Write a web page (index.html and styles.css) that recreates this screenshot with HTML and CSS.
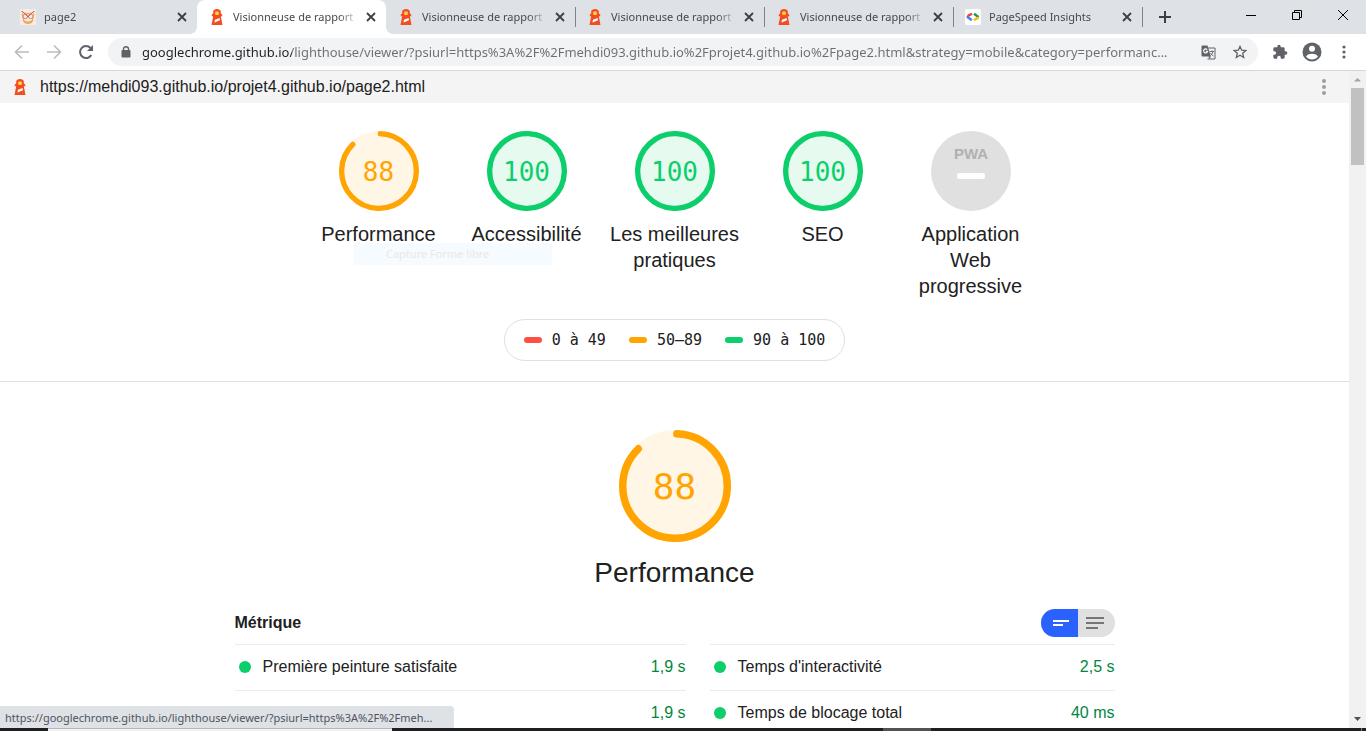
FILE: index.html
```html
<!DOCTYPE html>
<html lang="fr">
<head>
<meta charset="utf-8">
<title>Visionneuse de rapport</title>
<link rel="stylesheet" href="styles.css">
</head>
<body>
<svg class="defs" aria-hidden="true">
  <symbol id="lighthouse" viewBox="0 0 16 16">
    <path fill="#f44b21" d="M8 0C6 0 4.200 1.200 4.200 2.600V4.600L2.800 5.400V7.200H4.200L2.500 16H13.500L11.800 7.200H13.200V5.400L11.800 4.600V2.600C11.800 1.200 10 0 8 0Z"/>
    <rect x="6.200" y="2.600" width="3.600" height="3.400" rx="0.800" fill="#ffd54a"/>
    <path fill="#fff" d="M6 10.800L10.600 9L11 11.200L5.500 13.500Z"/>
  </symbol>
  <symbol id="cross" viewBox="0 0 10 10">
    <path d="M1 1L9 9M9 1L1 9" stroke="currentColor" stroke-width="1.800" fill="none"/>
  </symbol>
</svg>
<div class="browser">
  <div class="tabstrip">
    <div class="tab tab-plain">
      <svg class="favicon" viewBox="0 0 16 16"><rect width="16" height="16" fill="#f6ebe7"/><path d="M1.500 2C3 4.500 5 4.500 8 4.500S13 4.500 14.500 2M2 4.500L3 9C4 13 6 14.500 8 14.500S12 13 13 9L14 4.500M5.500 12L8 13.500L10.500 12M3 11L5 14M13 11L11 14" fill="none" stroke="#e9a85f" stroke-width="1.100"/><circle cx="5.300" cy="7.300" r="2.300" fill="none" stroke="#dc7a6a"/><circle cx="10.700" cy="7.300" r="2.300" fill="none" stroke="#e08a5a"/><path d="M2 2L8 8L14 2" fill="none" stroke="#cf5a50" stroke-width="0.900"/></svg>
      <span class="tab-title">page2</span>
      <button class="tab-close" aria-label="Fermer"><svg><use href="#cross"/></svg></button>
    </div>
    <div class="tab tab-active">
      <svg class="favicon"><use href="#lighthouse"/></svg>
      <span class="tab-title">Visionneuse de rapport</span>
      <button class="tab-close" aria-label="Fermer"><svg><use href="#cross"/></svg></button>
    </div>
    <div class="tab">
      <svg class="favicon"><use href="#lighthouse"/></svg>
      <span class="tab-title">Visionneuse de rapport</span>
      <button class="tab-close" aria-label="Fermer"><svg><use href="#cross"/></svg></button>
    </div>
    <div class="tab">
      <svg class="favicon"><use href="#lighthouse"/></svg>
      <span class="tab-title">Visionneuse de rapport</span>
      <button class="tab-close" aria-label="Fermer"><svg><use href="#cross"/></svg></button>
    </div>
    <div class="tab">
      <svg class="favicon"><use href="#lighthouse"/></svg>
      <span class="tab-title">Visionneuse de rapport</span>
      <button class="tab-close" aria-label="Fermer"><svg><use href="#cross"/></svg></button>
    </div>
    <div class="tab">
      <svg class="favicon" viewBox="0 0 16 16"><rect width="16" height="16" rx="2" fill="#fff"/><g fill="none" stroke-width="2.400"><path d="M7 4.800L3.800 6.400Q1.500 8 3.800 8.600" stroke="#ea4335"/><path d="M2.300 7.800L6.800 11.200" stroke="#4285f4"/><path d="M9 4.800L13.700 8.200" stroke="#0f9d58"/><path d="M9 11.200L13.700 8.200" stroke="#fbbc05"/></g></svg>
      <span class="tab-title">PageSpeed Insights</span>
      <button class="tab-close" aria-label="Fermer"><svg><use href="#cross"/></svg></button>
    </div>
    <button class="new-tab" aria-label="Nouvel onglet"><svg viewBox="0 0 14 14" width="14" height="14"><path d="M7 1V13M1 7H13" stroke="#3c4043" stroke-width="2"/></svg></button>
    <div class="window-controls">
      <button aria-label="Réduire"><svg width="10" height="10"><path d="M0 5.500H10" stroke="#000"/></svg></button>
      <button aria-label="Restaurer"><svg width="10" height="10"><path d="M.5 2.500H7.500V9.500H.5ZM2.500 2.500V.5H9.500V7.500H7.500" fill="none" stroke="#000"/></svg></button>
      <button aria-label="Fermer la fenêtre"><svg width="10" height="10"><path d="M0 0L10 10M10 0L0 10" stroke="#000"/></svg></button>
    </div>
  </div>

  <div class="navbar">
    <button class="nav-button nav-off" aria-label="Précédent"><svg width="16" height="16" viewBox="0 0 16 16"><path d="M15 8H2M8 1.500L1.500 8L8 14.500" fill="none" stroke="currentColor" stroke-width="1.700"/></svg></button>
    <button class="nav-button nav-off" aria-label="Suivant"><svg width="16" height="16" viewBox="0 0 16 16"><path d="M1 8H14M8 1.500L14.500 8L8 14.500" fill="none" stroke="currentColor" stroke-width="1.700"/></svg></button>
    <button class="nav-button" aria-label="Actualiser"><svg width="16" height="16" viewBox="0 0 16 16"><path d="M13.300 11A6 6 0 1 1 12.500 4" fill="none" stroke="currentColor" stroke-width="2"/><path d="M15 1V7H9Z" fill="currentColor"/></svg></button>
    <div class="omnibox">
      <svg width="10" height="12" viewBox="0 0 10 12"><path d="M2.500 5V3A2.500 2.300 0 0 1 7.500 3V5" fill="none" stroke="#5f6368" stroke-width="1.400"/><rect x="0.500" y="4" width="9" height="7.500" rx="1" fill="#5f6368"/></svg>
      <input class="address" type="text" aria-label="Adresse" value="googlechrome.github.io/lighthouse/viewer/?psiurl=https%3A%2F%2Fmehdi093.github.io%2Fprojet4.github.io%2Fpage2.html&amp;strategy=mobile&amp;category=performanc...">
      <button class="omni-button" aria-label="Traduire"><svg width="15" height="15" viewBox="0 0 15 15"><path d="M6 3H14V14H6.500" fill="none" stroke="#5f6368"/><path d="M1.500 0.500H6.500L9.800 11.500H1.500Q0.500 11.500 0.500 10.500V1.500Q0.500 0.500 1.500 0.500Z" fill="#5f6368"/><path d="M6.200 4.600A2 2 0 1 0 6.600 6.300H4.800" fill="none" stroke="#fff" stroke-width="1.100"/><path d="M8.500 6.500H13M10.800 5.500V6.500M12 6.700Q11.500 9 9.500 10.500M9.500 8Q10.500 10 12.500 11" fill="none" stroke="#5f6368" stroke-width="0.900"/><path d="M7 11.500L9 14L9.800 11.500Z" fill="#5f6368"/></svg></button>
      <button class="omni-button" aria-label="Favori"><svg width="14" height="14" viewBox="0 0 14 14"><path d="M7 1.400L8.700 5.200L12.900 5.600L9.700 8.300L10.700 12.500L7 10.300L3.300 12.500L4.300 8.300L1.100 5.600L5.300 5.200Z" fill="none" stroke="#5f6368" stroke-width="1.300"/></svg></button>
    </div>
    <button class="nav-tool" aria-label="Extensions"><svg width="16" height="16" viewBox="0 0 24 24"><path fill="#5f6368" d="M20.500 11H19V7c0-1.100-.9-2-2-2h-4V3.500a2.500 2.500 0 0 0-5 0V5H4c-1.100 0-2 .9-2 2v3.800h1.500a2.700 2.700 0 0 1 0 5.400H2V20c0 1.100.9 2 2 2h3.800v-1.500a2.700 2.700 0 0 1 5.400 0V22H17c1.100 0 2-.9 2-2v-4h1.500a2.500 2.500 0 0 0 0-5z"/></svg></button>
    <button class="nav-tool" aria-label="Profil"><svg width="20" height="20" viewBox="0 0 20 20"><circle cx="10" cy="10" r="9.500" fill="#5f6368"/><circle cx="10" cy="6.800" r="3" fill="#fff"/><path d="M4 14.500C5 12.400 8 11.700 10 11.700S15 12.400 16 14.500A7.500 7.500 0 0 1 4 14.500Z" fill="#fff"/></svg></button>
    <button class="nav-tool" aria-label="Menu"><svg width="4" height="14" viewBox="0 0 4 14" fill="#5f6368"><circle cx="2" cy="2" r="1.600"/><circle cx="2" cy="7" r="1.600"/><circle cx="2" cy="12" r="1.600"/></svg></button>
  </div>

  <div class="viewport">
    <main class="report">
      <div class="topbar">
        <svg class="topbar-logo"><use href="#lighthouse"/></svg>
        <a class="topbar-url" href="#">https://mehdi093.github.io/projet4.github.io/page2.html</a>
        <button class="topbar-menu" aria-label="Outils"><svg width="4" height="16" viewBox="0 0 4 16" fill="#9e9e9e"><circle cx="2" cy="2" r="2"/><circle cx="2" cy="8" r="2"/><circle cx="2" cy="14" r="2"/></svg></button>
      </div>

      <header class="scores">
        <div class="gauges">
          <a class="gauge average" href="#performance">
            <span class="dial"><svg viewBox="0 0 120 120"><circle class="dial-base" cx="60" cy="60" r="60"/><circle class="dial-arc" cx="60" cy="60" r="56" stroke-dasharray="305.800 352"/></svg><span class="dial-value">88</span></span>
            <span class="gauge-label">Performance</span>
          </a>
          <a class="gauge pass" href="#a11y">
            <span class="dial"><svg viewBox="0 0 120 120"><circle class="dial-base" cx="60" cy="60" r="60"/><circle class="dial-arc" cx="60" cy="60" r="56"/></svg><span class="dial-value">100</span></span>
            <span class="gauge-label">Accessibilité</span>
          </a>
          <a class="gauge pass" href="#best">
            <span class="dial"><svg viewBox="0 0 120 120"><circle class="dial-base" cx="60" cy="60" r="60"/><circle class="dial-arc" cx="60" cy="60" r="56"/></svg><span class="dial-value">100</span></span>
            <span class="gauge-label">Les meilleures pratiques</span>
          </a>
          <a class="gauge pass" href="#seo">
            <span class="dial"><svg viewBox="0 0 120 120"><circle class="dial-base" cx="60" cy="60" r="60"/><circle class="dial-arc" cx="60" cy="60" r="56"/></svg><span class="dial-value">100</span></span>
            <span class="gauge-label">SEO</span>
          </a>
          <a class="gauge" href="#pwa">
            <span class="dial"><svg viewBox="0 0 80 80"><circle cx="40" cy="40" r="40" fill="#e0e0e0"/><text class="pwa-mark" x="40" y="28" text-anchor="middle">PWA</text><rect x="26" y="42" width="28" height="6" rx="3" fill="#fff"/></svg></span>
            <span class="gauge-label">Application Web progressive</span>
          </a>
        </div>
        <div class="scale">
          <span class="range range-fail">0 à 49</span>
          <span class="range range-average">50–89</span>
          <span class="range range-pass">90 à 100</span>
        </div>
      </header>

      <section class="category" id="performance">
        <div class="category-head average">
          <span class="dial dial-large"><svg viewBox="0 0 120 120"><circle class="dial-base" cx="60" cy="60" r="60"/><circle class="dial-arc" cx="60" cy="60" r="56" stroke-dasharray="305.800 352"/></svg><span class="dial-value">88</span></span>
          <h1>Performance</h1>
        </div>
        <div class="metrics-head">
          <h2>Métrique</h2>
          <div class="view-toggle">
            <label class="view-on"><input type="radio" name="view" aria-label="Vue simple" checked><svg width="24" height="24" viewBox="0 0 24 24"><path d="M4 9h16v2H4zM4 13h10v2H4z" fill="#fff"/></svg></label>
            <label class="view-off"><input type="radio" name="view" aria-label="Vue détaillée"><svg width="24" height="24" viewBox="0 0 24 24"><path d="M3 6h18v2H3zM3 11h18v2H3zM3 16h12v2H3z" fill="#757575"/></svg></label>
          </div>
        </div>
        <div class="metrics">
          <div class="metric"><span class="metric-name">Première peinture satisfaite</span><span class="metric-value">1,9 s</span></div>
          <div class="metric"><span class="metric-name">Temps d'interactivité</span><span class="metric-value">2,5 s</span></div>
          <div class="metric"><span class="metric-name">Indice de vitesse</span><span class="metric-value">1,9 s</span></div>
          <div class="metric"><span class="metric-name">Temps de blocage total</span><span class="metric-value">40 ms</span></div>
        </div>
      </section>
      <div class="ghost-tip">Capture Forme libre</div>
    </main>
    <div class="scrollbar">
      <svg width="17" height="17"><path d="M5 10.500L8.500 7L12 10.500Z" fill="#a3a3a3"/></svg>
      <div class="scroll-thumb"></div>
      <svg class="scroll-down" width="17" height="17"><path d="M5 6L8.500 10L12 6Z" fill="#505050"/></svg>
    </div>
    <div class="status">https://googlechrome.github.io/lighthouse/viewer/?psiurl=https%3A%2F%2Fmeh...</div>
  </div>
  <div class="taskbar"><span class="task-search"></span><span class="task-app"></span><span class="task-peek"></span></div>
</div>
</body>
</html>
```

FILE: styles.css
```css
* { box-sizing: border-box; }

body {
  margin: 0;
  font-family: "Liberation Sans", Arial, sans-serif;
  font-size: 16px;
  color: #212121;
}

button {
  display: flex;
  align-items: center;
  justify-content: center;
  border: 0;
  padding: 0;
  background: none;
}

a { color: inherit; text-decoration: none; }

.defs { position: absolute; width: 0; height: 0; }

.browser {
  display: flex;
  flex-direction: column;
  height: 100vh;
  overflow: hidden;
  background: #fff;
}

/* Tab strip */
.tabstrip {
  display: flex;
  height: 34px;
  padding-left: 8px;
  background: #dee1e6;
  font-family: "Noto Sans", "Open Sans", sans-serif;
  font-size: 11px;
}

.tab {
  position: relative;
  display: flex;
  align-items: center;
  width: 189px;
  padding: 0 9px 0 12px;
  color: #45494d;
}

.tab::after {
  content: "";
  position: absolute;
  right: -1px;
  top: 7px;
  width: 1px;
  height: 20px;
  background: #808387;
}

.tab-plain::after { display: none; }

.tab-active {
  background: #fff;
  border-radius: 8px 8px 0 0;
}

.tab-active::before,
.tab-active::after {
  content: "";
  position: absolute;
  top: auto;
  bottom: 0;
  width: 8px;
  height: 8px;
}

.tab-active::before {
  left: -8px;
  background: radial-gradient(circle at 0 0, #dee1e6 8px, #fff 8px);
}

.tab-active::after {
  right: -8px;
  background: radial-gradient(circle at 100% 0, #dee1e6 8px, #fff 8px);
}

.favicon { width: 16px; height: 16px; flex: none; }

.tab-title {
  flex: 1;
  margin: 0 6px 0 8px;
  overflow: hidden;
  white-space: nowrap;
  line-height: 20px;
  -webkit-mask-image: linear-gradient(90deg, #000 calc(100% - 20px), transparent);
  mask-image: linear-gradient(90deg, #000 calc(100% - 20px), transparent);
}

.tab-close { width: 12px; height: 16px; color: #3c4043; }
.tab-close svg { width: 10px; height: 10px; }

.new-tab { width: 46px; }

.window-controls { display: flex; margin-left: auto; }
.window-controls button { width: 46px; height: 29px; }

/* Navigation bar */
.navbar {
  display: flex;
  align-items: center;
  height: 37px;
  padding: 0 6px;
  border-bottom: 1px solid #d5d7da;
}

.nav-button { width: 32px; height: 28px; color: #5f6368; }
.nav-off { color: #bbbdbf; }

.omnibox {
  display: flex;
  align-items: center;
  flex: 1;
  height: 28px;
  margin: 0 6px;
  padding: 0 2px 0 13px;
  border-radius: 14px;
  background: #f1f3f4;
}

.address {
  flex: 1;
  min-width: 0;
  margin-left: 11px;
  padding: 0;
  border: 0;
  outline: 0;
  font: 13px/20px "Noto Sans", "Open Sans", sans-serif;
  color: transparent;
  background: linear-gradient(90deg, #202124 150px, #6b6f73 150px);
  -webkit-background-clip: text;
  background-clip: text;
}

.omni-button { width: 32px; height: 28px; }
.nav-tool { width: 32px; height: 28px; }

/* Page area */
.viewport {
  position: relative;
  display: flex;
  flex: 1;
  min-height: 0;
}

.report {
  position: relative;
  flex: 1;
  overflow: hidden;
}

.topbar {
  display: flex;
  align-items: center;
  height: 32px;
  padding: 0 12px;
  background: #f4f4f4;
}

.topbar-logo { width: 16px; height: 18px; }
.topbar-url { flex: 1; margin-left: 12px; color: #212121; }
.topbar-menu { width: 26px; height: 24px; }

.scores {
  display: flex;
  flex-direction: column;
  align-items: center;
  padding: 28px 0 20px;
  border-bottom: 1px solid #e0e0e0;
}

.gauges { display: flex; }

.gauge {
  display: flex;
  flex-direction: column;
  align-items: center;
  width: 148px;
  padding: 0 8px;
}

.average { --tone: #ffa400; --tint: #fff6e6; }
.pass { --tone: #0cce6b; --tint: #e7faf0; }

.dial {
  display: grid;
  place-items: center;
  width: 80px;
  height: 80px;
  font: 26px/32px "DejaVu Sans Mono", monospace;
}

.dial > * { grid-area: 1 / 1; }
.dial svg { width: 100%; height: 100%; }
.dial-base { fill: var(--tint); }
.dial-value { padding-top: 2px; color: var(--tone); }

.dial-arc {
  fill: none;
  stroke: var(--tone);
  stroke-width: 8;
  stroke-linecap: round;
  transform: rotate(-88deg);
  transform-origin: 50% 50%;
}

.dial-large { width: 112px; height: 112px; font-size: 36px; }

.pwa-mark {
  font: bold 15px "Liberation Sans", Arial, sans-serif;
  fill: #b0b0b0;
}

.gauge-label {
  margin-top: 10px;
  font-size: 20px;
  line-height: 26px;
  text-align: center;
}

.scale {
  display: flex;
  gap: 23px;
  margin-top: 20px;
  padding: 10px 19px;
  border: 1px solid #e0e0e0;
  border-radius: 21px;
  font: 15px/20px "DejaVu Sans Mono", monospace;
}

.range { display: flex; align-items: center; gap: 10px; }

.range::before {
  content: "";
  width: 18px;
  height: 6px;
  border-radius: 3px;
  background: currentColor;
}

.range-fail::before { background: #ff4e42; }
.range-average::before { background: #ffa400; }
.range-pass::before { background: #0cce6b; }

.category {
  max-width: 880px;
  margin: 0 auto;
  padding-top: 48px;
}

.category-head {
  display: flex;
  flex-direction: column;
  align-items: center;
}

h1 {
  margin: 14px 0 18px;
  font-size: 28px;
  font-weight: 400;
  line-height: 34px;
}

.metrics-head {
  display: flex;
  align-items: center;
  justify-content: space-between;
  height: 30px;
}

h2 { margin: 0; font-size: 16px; line-height: 22px; }

.view-toggle {
  display: flex;
  overflow: hidden;
  border-radius: 14px;
  background: #e0e0e0;
}

.view-toggle label {
  display: grid;
  place-items: center;
  width: 37px;
  height: 28px;
}

.view-toggle input {
  grid-area: 1 / 1;
  width: 100%;
  height: 100%;
  margin: 0;
  opacity: 0;
}

.view-toggle svg { grid-area: 1 / 1; }
.view-on { background: #2962ff; padding-left: 3px; }
.view-off { padding-right: 3px; }

.metrics {
  display: grid;
  grid-template-columns: 451fr 405fr;
  column-gap: 24px;
  margin-top: 6px;
}

.metric {
  display: flex;
  align-items: center;
  height: 46px;
  padding: 0 0 2px 4px;
  border-top: 1px solid #ebebeb;
  line-height: 20px;
}

.metric::before {
  content: "";
  width: 12px;
  height: 12px;
  margin-right: 12px;
  border-radius: 50%;
  background: #0cce6b;
}

.metric-name { flex: 1; }
.metric-value { color: #018642; }

/* Fading capture menu entry left over the report */
.ghost-tip {
  position: absolute;
  left: 354px;
  top: 172px;
  width: 198px;
  padding: 1px 32px;
  background: rgba(225, 243, 252, 0.35);
  color: #ebe8e8;
  font: 11px/20px "Noto Sans", "Open Sans", sans-serif;
  white-space: nowrap;
}

.scrollbar {
  display: flex;
  flex-direction: column;
  align-items: center;
  width: 17px;
  background: #f1f1f1;
}

.scroll-thumb { width: 13px; height: 77px; background: #c1c1c1; }
.scroll-down { margin-top: auto; }

.status {
  position: absolute;
  left: 0;
  bottom: 0;
  width: 454px;
  padding: 2px 5px 0;
  border-top-right-radius: 4px;
  background: #dee1e6;
  color: #50545a;
  font: 11px/20px "Noto Sans", "Open Sans", sans-serif;
  white-space: nowrap;
}

.taskbar {
  display: flex;
  height: 3px;
  background: #1c2023;
}

.task-search { width: 344px; margin-left: 48px; background: #f2f2f2; border-top: 1px solid #b5b5b5; }
.task-app { width: 48px; margin-left: 491px; background: #505356; }
.task-peek { width: 1px; margin: 0 4px 0 auto; background: #808488; }
```
